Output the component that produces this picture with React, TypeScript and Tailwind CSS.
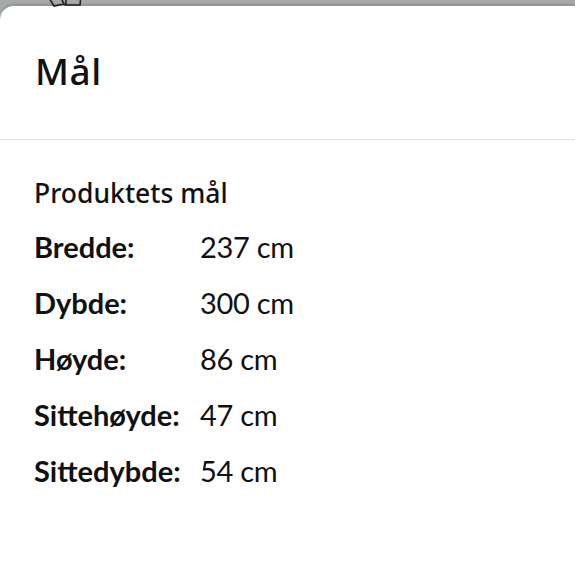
import React from "react";

const rows = [
  ["Bredde:", "237 cm"],
  ["Dybde:", "300 cm"],
  ["Høyde:", "86 cm"],
  ["Sittehøyde:", "47 cm"],
  ["Sittedybde:", "54 cm"],
];

export default function App() {
  return (
    <div className="relative h-[573px] w-[575px] overflow-hidden bg-[#a5aaa8]">
      <svg className="absolute left-[46px] top-[-8px]" width="40" height="16" viewBox="0 0 40 16" fill="none" stroke="#222" strokeWidth="1.6">
        <path d="M3 6 L8 14 L18 12 L14 4" />
        <path d="M20 4 L20 13 L34 13 L35 3" />
        <path d="M18 12 L20 13" />
      </svg>
      <div className="mt-[5px] h-[568px] rounded-tl-[14px] border-t border-[#999] bg-white shadow-[0_-1px_2px_rgba(0,0,0,0.15)]">
        <div className="flex h-[134px] items-center border-b border-[#e2e2e2] px-[35px]">
          <h1 className="mt-[-4px] text-[37px] font-medium leading-none text-[#111] tracking-[0.5px]" style={{ fontFamily: '"Noto Sans", sans-serif' }}>
            Mål
          </h1>
        </div>
        <div className="px-[34px] pt-[33px]">
          <h2 className="text-[26.5px] font-medium leading-[40px] text-[#111]" style={{ fontFamily: '"Noto Sans", sans-serif' }}>
            Produktets mål
          </h2>
          <div className="mt-[6px]" style={{ fontFamily: 'Lato, sans-serif' }}>
            {rows.map(([k, v]) => (
              <div key={k} className="flex h-[56px] items-center text-[29px] text-[#111]">
                <span className="w-[166px] font-bold">{k}</span>
                <span className="tracking-[-0.3px]">{v}</span>
              </div>
            ))}
          </div>
        </div>
      </div>
    </div>
  );
}
